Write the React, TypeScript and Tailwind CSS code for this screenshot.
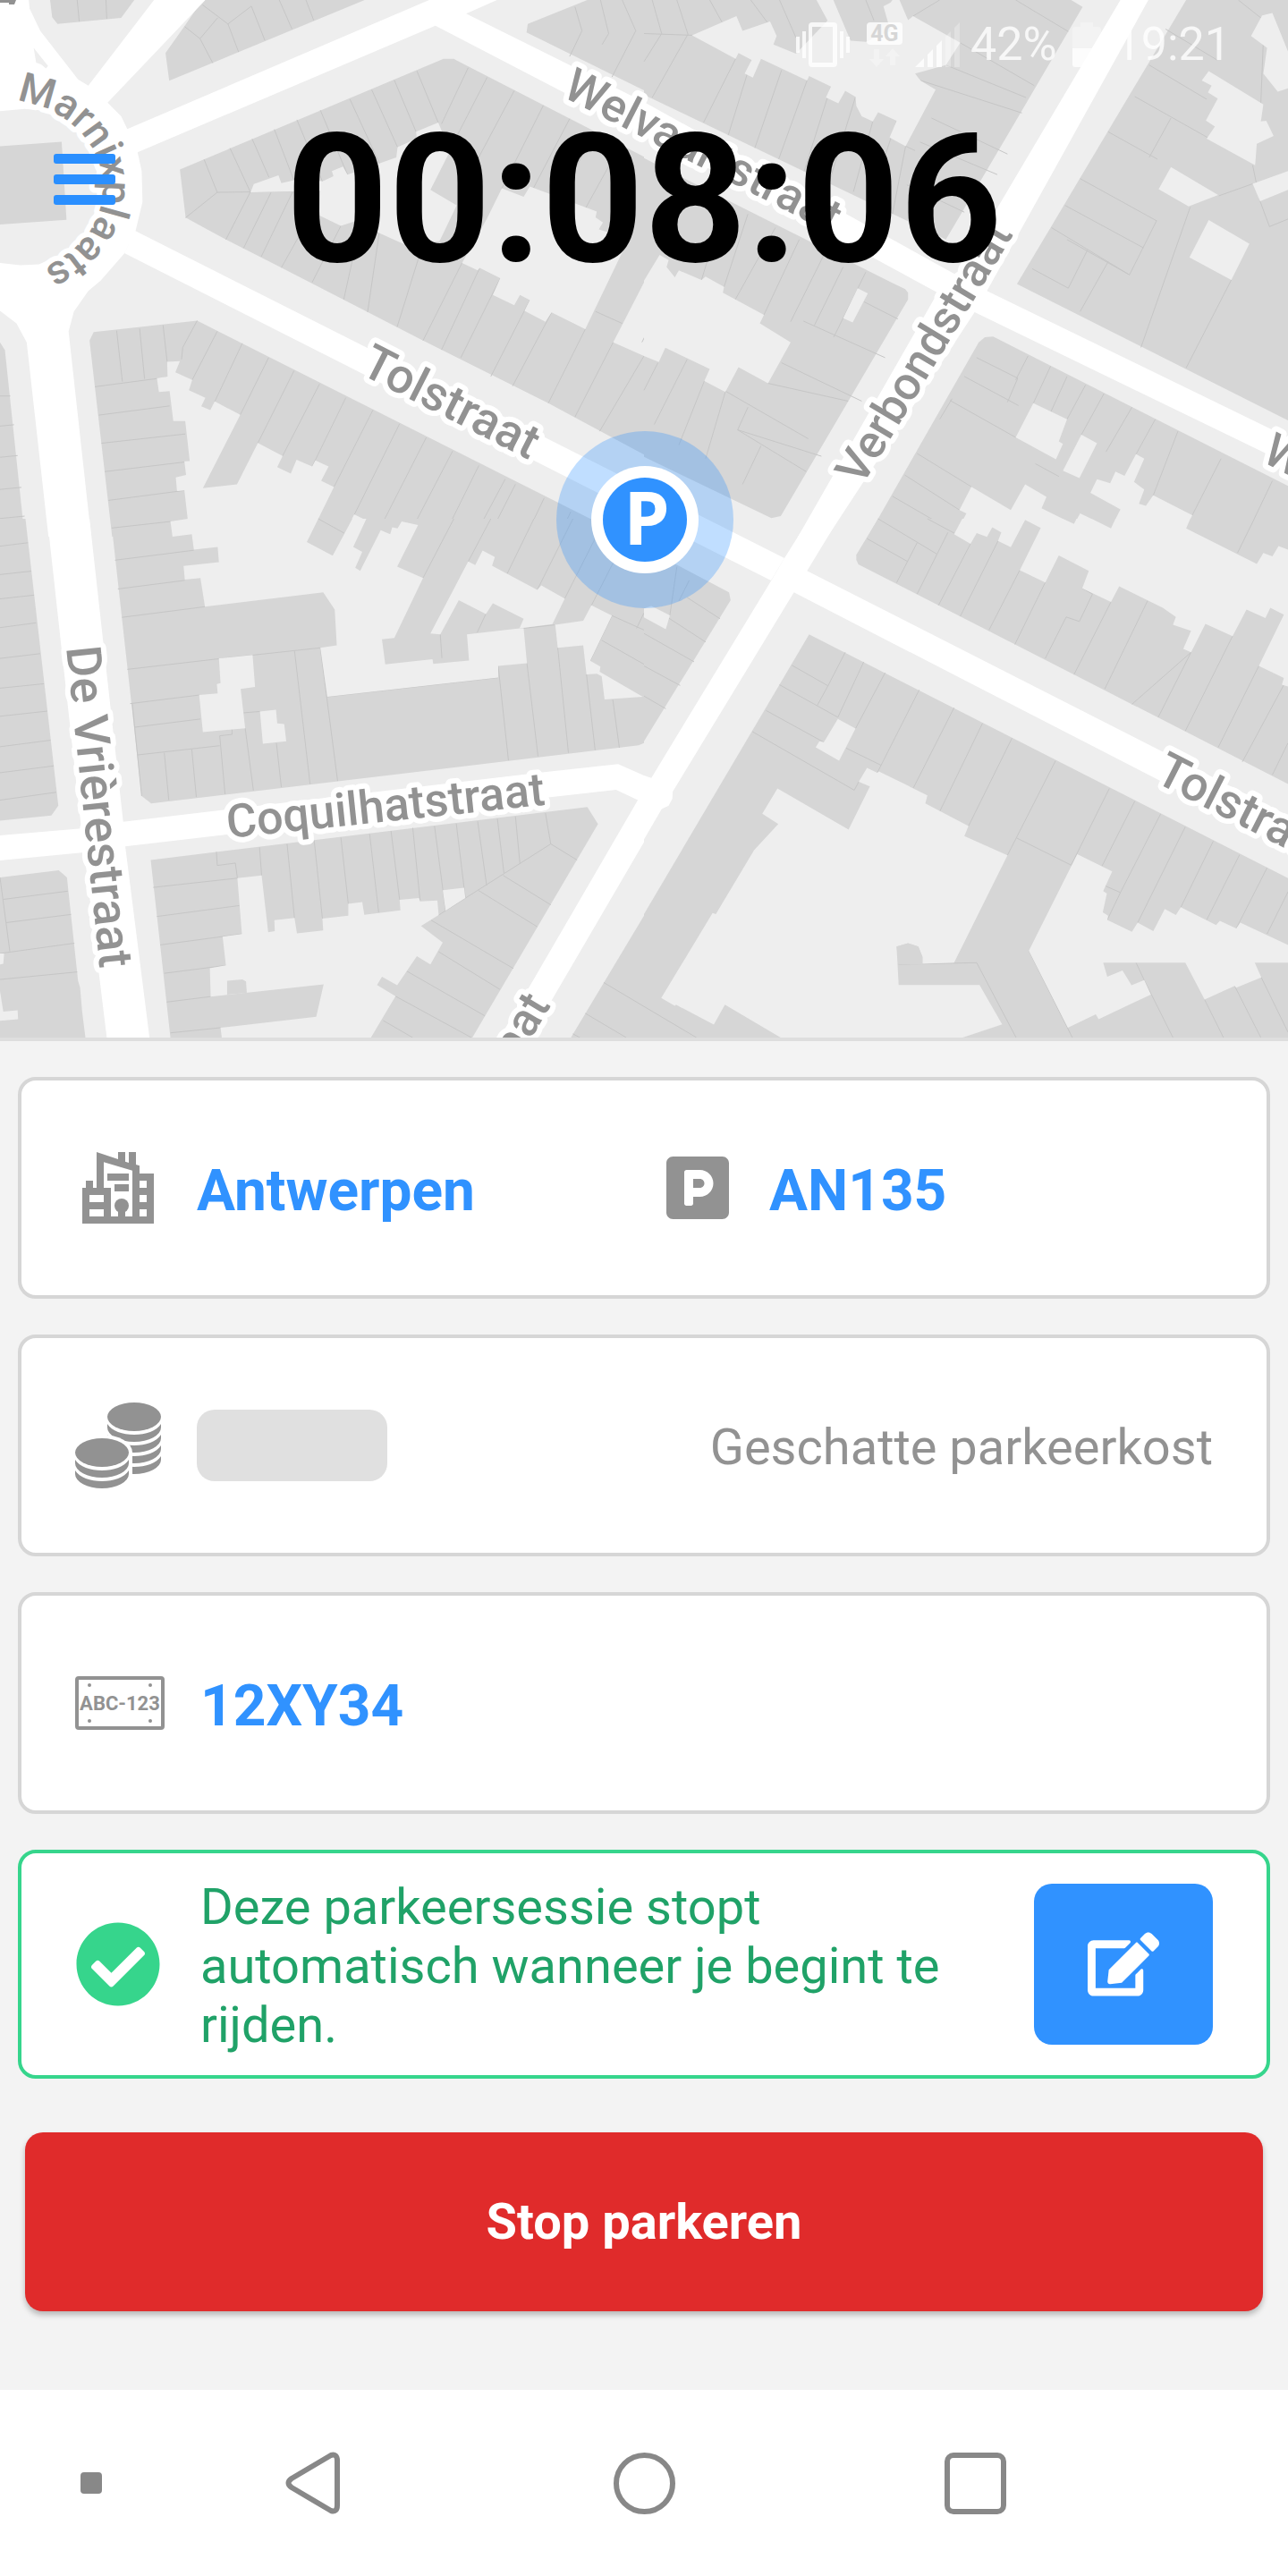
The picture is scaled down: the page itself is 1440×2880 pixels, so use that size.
import type { ReactNode } from "react";
import { FaCheckCircle, FaEdit, FaParking } from "react-icons/fa";

const GROUND = "#eeeeee";

type TileData = {
  transform: string;
  blocks: string[];
  yards: string[];
  lots?: string[];
  parcels: string;
};

/* The city map is stored as four tiles; each tile has its own 1568-unit grid. */
const tiles: TileData[] = [
  {
    transform: "scale(0.45918 0.38265)",
    blocks: [
      "122,0 127,50 140,70 295,52 327,0",
      "493,0 450,75 403,155 412,236 888,0",
      "1430,0 1285,70 1282,95 1568,264 1568,0",
      "438,495 1080,172 1105,172 1568,458 1568,1328 1335,1178 1030,995 685,782 550,700 452,636",
      "218,995 228,970 480,937 1568,1595 273,1568",
      "0,1000 12,1023 60,1568 0,1568",
      "0,427 150,414 162,642 0,656",
    ],
    yards: [
      "610,562 618,538 678,512 685,535 740,520 785,530 812,515 808,500 835,487 846,510 965,460 968,430 1015,405 1013,385 1067,358 1085,410 1092,450 1048,555 1112,600 1070,705 985,714 922,680 880,640 830,660 778,630 780,558",
      "1222,550 1275,575 1290,545 1453,618 1450,635 1468,650 1458,670 1485,680 1530,700 1425,962 1343,913 1328,940 1277,908 1290,877 1266,862 1252,892 1200,862 1218,813 1168,783 1163,790 1125,768 1185,640",
      "1568,825 1493,1000 1568,1040",
      "407,1057 438,1055 427,1088 468,1110 460,1140 500,1162 490,1187 512,1198 523,1173 585,1212 494,1426 577,1415 628,1294 688,1332 675,1365 708,1384 722,1343 760,1363 768,1345 800,1363 782,1405 813,1423 775,1516 775,1568 418,1568 415,1525 457,1517 449,1433 431,1435 428,1395 453,1388 449,1348 462,1347 451,1230 422,1230 413,1143 387,1145 382,1105 408,1100",
      "862,1503 892,1520 875,1568 837,1568",
    ],
    parcels:
      "M188 0L193 63M258 0L260 55M493 14L555 70L612 18M555 70L581 152M612 18L645 118M680 0L711 85M530 52L487 113L450 78M487 113L518 184M745 0L764 60" +
      "M497 466L529 562L452 636M529 562L780 558M560 433L610 562M614 406L655 518M668 378L715 525M723 350L785 530M780 322L846 510M852 290L925 480M905 262L968 430M960 234L1013 385M1015 207L1067 358" +
      "M1140 198L1075 362M1186 226L1090 450M1252 265L1130 540M1323 308L1222 550M1387 347L1290 570M1450 385L1360 580M1510 425L1425 610" +
      "M609 562L550 700M660 562L593 725M712 562L636 750M770 600L685 782M830 660L760 825M880 640L837 875M925 668L895 912M1030 712L967 955M1125 768L1030 995M1168 783L1075 1022M1218 813L1122 1045M1290 877L1195 1100M1343 913L1248 1128M1425 962L1335 1178M1493 1000L1400 1218M1568 1040L1460 1260M1450 910L1515 945" +
      "M284 966L298 1115M340 960L352 1107M397 950L407 1057M231 1130L408 1102M480 937L445 1015L442 1050M529 968L468 1110M590 1003L523 1173M654 1045L585 1212M716 1083L628 1294M778 1122L688 1332M842 1162L760 1363M908 1198L813 1423M973 1238L860 1510M1038 1278L935 1520M1102 1318L1010 1530M1166 1360L1080 1568M1230 1400L1155 1568M1255 1415L1190 1568M1325 1455L1280 1568M1390 1495L1360 1568" +
      "M240 1213L413 1186M247 1295L451 1268M255 1378L449 1350M264 1462L449 1433M273 1543L415 1525M0 1157L25 1157M0 1245L34 1241M0 1336L43 1331M0 1430L52 1424M0 1515L60 1508" +
      "M1400 20L1417 90L1387 165M1462 0L1482 98L1466 130M1515 0L1548 90L1490 225",
  },
  {
    transform: "translate(720 0) scale(0.45918 0.38265)",
    blocks: [
      "0,0 1040,0 1068,20 890,385 735,700 640,645 0,277",
      "0,462 600,824 636,845 643,855 643,875 333,1508 310,1514 0,1335",
      "1320,0 908,830 1568,1228 1568,0",
      "830,985 850,983 1568,1420 1568,1568 545,1568 815,1000",
    ],
    yards: [
      "117,103 225,47 240,90 307,63 323,105 315,130 370,157 447,60 420,0 461,0 503,119 540,122 600,90 583,18 600,8 605,0 622,0 643,59 655,47 770,125 735,190 660,215 673,235 710,262 637,427 598,402 615,353 570,328 557,355 530,340 517,310 515,283 490,265 473,302 443,285 455,253 402,222 397,235 285,172 265,227 245,215 262,175 230,155 223,172",
      "0,820 38,745 60,760 55,780 75,810 85,790 140,818 150,808 195,838 192,855 292,920 282,945 357,1000 302,1120 230,1073 198,1145 147,1113 160,1078 52,1016 36,1058 0,1040",
      "520,842 545,857 508,942 485,930",
      "1375,208 1508,305 1502,355 1515,353 1533,397 1492,420 1488,483 1370,405 1390,370 1368,352 1397,288 1373,270 1382,250 1358,235",
      "1530,38 1568,150 1568,258 1543,268 1508,215 1517,140 1478,105 1505,45",
      "1283,488 1398,570 1326,603 1253,553",
      "1482,537 1568,500 1568,555 1500,588",
      "1375,643 1474,712 1430,818 1328,752",
      "948,1178 1030,1225 1010,1290 1020,1297 1003,1342 905,1278",
      "1065,1270 1103,1295 1060,1397 1020,1375",
      "797,1422 893,1490 928,1415 980,1452 968,1485 1047,1532 1062,1500 1137,1543 1160,1488 1087,1440 1103,1400 1135,1412 1148,1378 1170,1390 1198,1327 1218,1340 1193,1408 1218,1430 1205,1472 1222,1478 1240,1447 1335,1505 1320,1540 1320,1568 755,1568 785,1500 768,1490",
    ],
    parcels:
      "M20 0L43 98L0 180M80 0L107 100L20 285M0 98L117 103M160 0L190 65M260 0L300 65M330 0L370 110M223 172L145 358M262 175L205 395M335 205L270 432M397 235L328 465M455 253L390 500M515 283L450 535M557 355L510 560M615 353L550 590" +
      "M540 0L560 60M720 0L655 47M770 125L950 250M673 235L920 330M637 427L605 625M672 415L860 510M637 427L660 440M640 540L780 620M700 345L885 450M905 0L1033 92M735 190L930 285" +
      "M1270 85L1395 175M1230 190L1370 290M1195 282L1488 480M1130 385L1250 465M1283 345L1230 460M1062 522L1248 645L1182 803L1030 700M1025 600L1216 724M992 665L1182 803M1080 730L1033 842L945 785M1130 765L1062 910M1330 605L1210 1015M1430 818L1320 1075M1400 572L1482 537M1482 483L1500 588L1523 662L1568 640M1447 0L1510 60L1500 355" +
      "M75 810L-5 1000M198 590L140 818M253 625L195 838M320 665L220 880M378 700L292 920M440 740L357 940M485 780L415 950M540 795L462 985M536 882L618 932M388 938L587 1045M335 1060L530 1172M302 1120L497 1172M180 1130L400 1282M253 1190L228 1256L432 1333M285 1302L240 1415M228 1256L395 1378M105 1050L25 1240M147 1113L85 1300M198 1145L150 1340M34 1060L0 1140" +
      "M780 1100L912 1185M810 1045L910 1105L885 1175M935 1040L905 1110M990 1070L948 1178M1030 1100L990 1205M1075 1125L1030 1225M1120 1150L1065 1270M1188 1190L1125 1320M1245 1225L1198 1327M1300 1260L1240 1447M1405 1340L1335 1505M1530 1405L1465 1568M745 1170L905 1278M665 1325L797 1422M635 1388L768 1490M605 1450L720 1530M953 1355L1010 1392M750 1165L720 1225",
  },
  {
    transform: "translate(0 580) scale(0.45918 0.38265)",
    blocks: [
      "270,0 1568,0 1568,655 1555,662 368,832 345,810",
      "367,997 1430,842 1456,892 1150,1516 415,1516",
      "0,0 62,0 142,838 125,867 0,882",
      "0,1048 143,1027 163,1048 190,1350 195,1370 200,1440 208,1516 0,1516",
      "1568,1160 1390,1516 1568,1516",
    ],
    yards: [
      "457,0 415,8 420,52 467,45 472,90 530,82 533,127 447,138 450,178 488,173 499,257 787,215 815,265 820,370 780,377 797,520 1213,464 1213,430 1283,422 1275,320 1265,320 1137,338 1142,414 1055,424 1053,410 938,425 930,352 960,348 1030,173 967,140 1018,18 978,8 968,28 955,25 950,45 927,33 877,152 865,143 882,97 860,82 892,0 858,0 810,108 747,68 775,0",
      "1048,335 1140,125 1157,135 1175,93 1205,112 1198,137 1308,208 1318,195 1375,233 1345,308 1265,320 1275,292 1200,247 1183,278 1117,238 1072,338",
      "1352,310 1420,298 1440,253 1490,283 1437,415 1462,432 1460,447 1565,520 1472,528 1465,460 1453,453 1428,455 1420,370 1358,377",
      "533,408 615,398 621,491 586,497 597,612 494,623 485,515 530,510 528,483 537,480",
      "633,563 672,558 675,598 692,600 697,650 640,657",
      "578,1050 637,1042 653,1208 669,1205 668,1173 717,1166 723,1211 787,1203 785,1168 848,1160 848,1125 882,1120 887,1157 975,1144 973,1113 1020,1108 1023,1118 1065,1115 1068,1158 1025,1190 1078,1238 1048,1302 1015,1278 967,1363 930,1338 918,1362 963,1395 903,1516 540,1516 537,1487 770,1455 788,1360 513,1396 511,1313 550,1305 542,1221 589,1213",
      "1078,1085 1130,1078 1133,1108 1085,1145",
      "0,1270 10,1270 8,1300 0,1302",
      "0,1380 8,1440 43,1436 44,1462 0,1467",
    ],
    lots: ["553,1350 590,1346 599,1352 601,1385 553,1390"],
    parcels:
      "M272 27L415 8M280 121L472 92M287 205L450 180M297 288L499 257M310 440L533 409L780 377M317 540L485 515M328 609L488 585M335 690L535 663M322 540L345 810M400 684L411 822M467 674L478 813M565 615V630L535 634L548 805M597 612L617 794M593 567L633 563M673 655L685 784M717 385L755 775M780 377L822 766" +
      "M775 0L838 42M797 520L1213 464M1213 430L1238 706M1283 422L1310 694M1358 377L1384 684M1428 455L1449 676M1492 528L1508 669M1275 320L1350 310M1183 278L1162 332M1072 338L1076 407M1030 173L1105 0M1140 125L1195 0M1235 160L1300 0M1308 208L1395 0M1375 233L1465 20M1440 253L1535 30M1490 283L1568 325M1465 355L1568 425M1550 320L1568 275M1437 415L1490 283" +
      "M0 80L68 70M0 163L76 153M0 234L83 223M0 318L88 304M0 408L98 394M0 495L107 482M0 577L115 562M0 666L123 647M0 742L131 722M0 822L137 799" +
      "M8 1112L165 1088M15 1180L173 1156M0 1048L24 1264M0 1270L181 1240M0 1346L188 1324" +
      "M373 1077L578 1050M382 1162L583 1130M390 1245L589 1213M400 1328L550 1305M406 1412L513 1396M415 1502L537 1487M527 973L529 1013L573 1006L578 1050M632 960L637 1042M699 950L717 1166M765 940L785 1168M830 931L848 1125M900 921L922 1150M952 912L973 1113M1005 903L1023 1118M1058 898L1085 1145M1111 891L1133 1108M1163 884L1185 1072M1211 876L1227 1035M1255 870L1266 1008M1328 860L1341 950" +
      "M1068 1158L1341 950L1405 997M1225 1042L1341 1128M1165 1086L1308 1192M1050 1173L1250 1314M1068 1265L1217 1375M988 1320L1180 1452M963 1395L1148 1516M933 1466L1005 1516M1470 1355L1568 1425M1425 1445L1525 1516M1395 1505L1412 1516",
  },
  {
    transform: "translate(720 580) scale(0.45918 0.38265)",
    blocks: [
      "0,84 207,215 211,238 0,650",
      "570,0 517,105 517,120 522,133 1568,775 1568,0",
      "402,338 1568,1050 1568,1516 0,1516 0,1155",
    ],
    yards: [
      "775,0 755,45 795,73 810,42 835,53 848,25 870,40 862,65 893,83 928,3 966,27 915,150 977,186 1010,107 1083,152 1067,203 1137,243 1157,197 1263,260 1295,287 1288,310 1332,327 1313,380 1332,390 1367,307 1433,343 1467,265 1513,290 1525,260 1558,280 1497,430 1558,465 1553,485 1568,490 1568,90 1545,80 1530,110 1508,100 1492,132 1320,28 1330,0",
      "0,262 18,255 63,282 53,323 0,288",
      "325,788 498,908 550,782 523,768 543,728 568,742 572,738 690,808 685,832 790,898 780,927 885,983 755,1297 678,1300 678,1280 668,1250 643,1240 615,1250 620,1362 817,1362 872,1477 775,1516 333,1516 197,1420 170,1478 78,1420 75,1423 42,1400 167,1152 175,1155 268,968 327,892 288,862",
      "472,585 515,613 475,707 418,668 427,650 438,653",
      "1055,980 1140,1030 1118,1088 1127,1095 1117,1150 1130,1160 1128,1172 1188,1207 1202,1180 1240,1205 1268,1140 1295,1158 1307,1135 1393,1187 1402,1175 1442,1197 1452,1180 1568,1245 1568,1297 1487,1297 1503,1340 1442,1370 1438,1365 1365,1405 1318,1297 1118,1297 1128,1338 1165,1320 1187,1363 1218,1348 1234,1390 1107,1462 1100,1448 1032,1487 937,1262",
    ],
    lots: ["1020,0 1047,15 1053,0", "1090,0 1137,28 1148,0", "615,1250 643,1240 668,1250 678,1280 678,1302 620,1302"],
    parcels:
      "M0 335L122 418M0 430L88 487M0 518L53 555M60 290L150 360M105 230L185 292M80 140L63 282M110 180L85 240" +
      "M570 0L713 103M543 58L642 125M665 70L615 187M740 40L665 220M795 73L717 253M862 65L770 285M915 150L840 325M977 186L903 367M1067 203L1092 220L1060 300L1028 287L977 408M1137 243L1047 455M1226 240L1122 497M1332 390L1188 542M1332 390L1252 580M1433 343L1318 620M1497 430L1398 668M1558 485L1457 710M1568 655L1530 748M1486 0L1445 100M690 0L760 45" +
      "M360 428L448 488L490 390M330 485L472 580L535 418M422 545L448 488M297 560L438 653M264 622L512 793L523 768M515 613L587 450M492 670L577 720M568 742L670 500M656 786L755 552M720 855L824 598M790 898L896 641M885 983L1002 707M908 933L1040 1012L1133 788M1115 1015L1195 825M1118 1070L1160 1092L1258 862M1202 1180L1318 900M1160 1092L1128 1172M1307 1135L1386 942M1370 1172L1450 982M1442 1197L1517 1020M1517 1213L1568 1090" +
      "M620 1302L810 1297L906 1516M937 1262L1043 1516M1198 1297L1218 1348L1288 1516M1365 1405L1411 1516M1438 1365L1502 1516M1503 1340L1568 1500M0 1425L128 1516",
  },
];

const labels = [
  { text: "Welvaartstraat", x: 627, y: 107, angle: 27, size: 52 },
  { text: "Tolstraat", x: 401, y: 417, angle: 27, size: 54 },
  { text: "Verbondstraat", x: 963, y: 545, angle: -59, size: 52 },
  { text: "De Vrièrestraat", x: 74, y: 724, angle: 84, size: 54 },
  { text: "Coquilhatstraat", x: 255, y: 937, angle: -6, size: 52 },
  { text: "Tolstraat", x: 1289, y: 873, angle: 27, size: 54 },
  { text: "Welvaartstraat", x: 1409, y: 515, angle: 27, size: 52 },
  { text: "Verbondstraat", x: 446, y: 1407, angle: -59, size: 52 },
];

function MapTile({ tile }: { tile: TileData }) {
  return (
    <g transform={tile.transform}>
      <g fill="#d6d6d6">
        {tile.blocks.map((p) => (
          <polygon key={p} points={p} />
        ))}
      </g>
      <path d={tile.parcels} fill="none" stroke="#c6c6c6" strokeWidth="1" vectorEffect="non-scaling-stroke" />
      <g fill={GROUND}>
        {tile.yards.map((p) => (
          <polygon key={p} points={p} />
        ))}
      </g>
      <g fill="#d6d6d6">
        {tile.lots?.map((p) => (
          <polygon key={p} points={p} />
        ))}
      </g>
    </g>
  );
}

function CityMap() {
  return (
    <svg viewBox="0 0 1440 1160" className="block h-auto w-full" role="img" aria-label="Kaart">
      <defs>
        <path id="plaats" d="M18 113C66 117 115 156 115 210C115 250 90 282 36 306" />
      </defs>
      <rect width="1440" height="1160" fill={GROUND} />
      {tiles.map((t) => (
        <MapTile key={t.transform} tile={t} />
      ))}
      <g fill="#ffffff">
        <g transform="scale(0.45918 0.38265)">
          <path
            fillRule="evenodd"
            d="M0 0H70L72 25L98 90L190 232L215 250L375 0H500L262 300L295 340L310 377L1045 0H1210L1135 40L1568 298V390L1365 265L1060 75L335 445L345 500L347 590L330 675L303 740L245 820L215 850L180 910L167 968L222 1568H118L65 1000L40 945L0 908V768L50 775L95 772L150 742L200 690L240 600L235 500L205 410L155 350L95 322L60 318L0 325ZM82 140L88 183L100 188L112 200L117 193Z"
          />
        </g>
        <path d="M151 258L877 624L862 649L139 283Z" />
        <g transform="translate(720 0) scale(0.45918 0.38265)">
          <path d="M0 298L763 805L1160 0H1228L835 850L1568 1278V1356L805 912L447 1568H375L715 855L0 390Z" />
        </g>
        <g transform="translate(0 580) scale(0.45918 0.38265)">
          <path d="M115 0H218L300 885L1320 741L1505 717L1568 750V945L1290 1516H1217L1553 822L1500 792L1330 815L305 957L364 1516H260L205 975L0 998V925L198 905Z" />
        </g>
        <g transform="translate(720 580) scale(0.45918 0.38265)">
          <path d="M402 0H474L397 152L1568 867V958L365 215L70 797L69 818L60 838L43 848L0 937V750L18 757L310 180L342 115Z" />
        </g>
      </g>
      <path d="M0 0H18L16 5H10V3H0Z" fill="#929292" />
      <g
        className="font-[Roboto,sans-serif] font-medium"
        fill="#929292"
        stroke="#ffffff"
        strokeWidth="12"
        strokeLinejoin="round"
        paintOrder="stroke"
      >
        {labels.map((l) => (
          <text key={`${l.text}${l.x}`} fontSize={l.size} transform={`translate(${l.x} ${l.y}) rotate(${l.angle})`}>
            {l.text}
          </text>
        ))}
        <text fontSize="46">
          <textPath href="#plaats">Marnixplaats</textPath>
        </text>
      </g>
      <circle cx="721" cy="581" r="99" fill="#3092ff" fillOpacity="0.3" />
      <circle cx="721" cy="581" r="60" fill="#ffffff" />
      <circle cx="721" cy="581" r="47" fill="#3092ff" />
      <text x="723" y="609" textAnchor="middle" className="font-['Open_Sans',sans-serif] text-[82px] font-bold" fill="#ffffff">
        P
      </text>
    </svg>
  );
}

function StatusBar() {
  return (
    <div className="absolute inset-x-0 top-0 flex items-center justify-end pt-[22px] pr-16 text-[52px] leading-[56px] text-white/80">
      <svg width="60" height="50" viewBox="0 0 60 50" fill="currentColor" className="mr-[19px]" aria-label="Trillen">
        <path fillRule="evenodd" d="M18 0H42Q46 0 46 4V46Q46 50 42 50H18Q14 50 14 46V4Q14 0 18 0ZM18 5V45H41V5Z" />
        <path d="M0 16H4V34H0ZM7 10H11V40H7ZM49 10H53V40H49ZM56 16H60V34H56Z" />
      </svg>
      <span className="mr-[14px] flex flex-col items-center gap-1">
        <span className="flex h-[25px] w-10 items-center justify-center rounded-[4px] bg-white/80 text-[25px] font-bold leading-none text-[#d6d6d6]">
          4G
        </span>
        <svg width="34" height="21" viewBox="0 0 34 21" fill="currentColor" opacity="0.4" aria-hidden="true">
          <path d="M5 1H11V12H16L8 21L0 12H5ZM23 19H29V9H34L26 0L18 9H23Z" />
        </svg>
      </span>
      <svg width="50" height="50" viewBox="0 0 50 50" fill="currentColor" className="mr-[12px]" aria-label="Signaal">
        <path d="M0 50L10 40V50ZM14 36L20 30V50H14ZM24 26L30 20V50H24Z" />
        <path opacity="0.35" d="M34 16L40 10V50H34ZM44 6L50 0V50H44Z" />
      </svg>
      <span className="mr-[17px]">42%</span>
      <svg width="32" height="50" viewBox="0 0 32 50" fill="currentColor" className="mr-4" aria-label="Batterij">
        <path opacity="0.35" d="M9 0H23V5H29Q32 5 32 8V29H0V8Q0 5 3 5H9Z" />
        <path d="M0 29H32V47Q32 50 29 50H3Q0 50 0 47Z" />
      </svg>
      <span>19:21</span>
    </div>
  );
}

function CityIcon() {
  return (
    <svg width="80" height="80" viewBox="0 0 20 20" fill="#929292" aria-hidden="true">
      <path
        fillRule="evenodd"
        d="M0 20V10H1V8H3V10H4V0L10 2V0H12V2.7L13 3V0H15V3.5L16 3.8V6H20V20ZM6 2.8V10H8V18H14V5.2ZM2 12V14H6V12ZM2 16V18H6V16ZM16 8V10H18V8ZM16 12V14H18V12ZM16 16V18H18V16Z"
      />
      <path d="M7 6H13V8H7ZM9 9H13V11H9ZM10 16H12V18H10Z" />
      <circle cx="11" cy="15" r="2" />
    </svg>
  );
}

const COIN_EDGE = "M0 0C5 8 17 12 30 12S55 8 60 0V4A30 16 0 0 1 0 4Z";

function CoinsIcon() {
  return (
    <svg width="96" height="96" viewBox="0 0 96 96" fill="#929292" aria-hidden="true">
      <ellipse cx="66" cy="16" rx="30" ry="16" />
      {[24, 36, 48, 60].map((y) => (
        <path key={y} d={COIN_EDGE} transform={`translate(36 ${y})`} />
      ))}
      <path d="M-4 56A34 20 0 0 1 64 56V96H-4Z" fill="#ffffff" />
      <ellipse cx="30" cy="56" rx="30" ry="16" />
      {[64, 76].map((y) => (
        <path key={y} d={COIN_EDGE} transform={`translate(0 ${y})`} />
      ))}
    </svg>
  );
}

function PlateIcon() {
  return (
    <svg width="100" height="60" viewBox="0 0 100 60" fill="#929292" className="shrink-0" aria-hidden="true">
      <rect x="2" y="2" width="96" height="56" rx="2" fill="none" stroke="#929292" strokeWidth="4" />
      <circle cx="16" cy="10" r="2" />
      <circle cx="84" cy="10" r="2" />
      <circle cx="16" cy="50" r="2" />
      <circle cx="84" cy="50" r="2" />
      <text x="50" y="38" textAnchor="middle" className="font-[Roboto,sans-serif] text-[22px] font-bold">
        ABC-123
      </text>
    </svg>
  );
}

function Card({ children, highlighted = false }: { children: ReactNode; highlighted?: boolean }) {
  return (
    <section
      className={
        highlighted
          ? "flex min-h-64 items-center rounded-[20px] border-4 border-[#36d58c] bg-white px-[60px]"
          : "flex min-h-[248px] items-center rounded-[20px] border-4 border-[#d6d6d6] bg-white px-[60px]"
      }
    >
      {children}
    </section>
  );
}

function IconSlot({ children }: { children: ReactNode }) {
  return <span className="flex w-24 shrink-0 items-center justify-center">{children}</span>;
}

export default function App() {
  return (
    <div className="flex min-h-screen flex-col bg-[#f3f3f3] font-[Roboto,sans-serif]">
      <header className="relative overflow-hidden border-b-4 border-[#dedede]">
        <CityMap />
        <StatusBar />
        <button type="button" aria-label="Menu" className="absolute top-[172px] left-[60px] flex w-[69px] flex-col gap-3">
          <span className="h-[11px] rounded-[3px] bg-[#2a8fff]" />
          <span className="h-[11px] rounded-[3px] bg-[#2a8fff]" />
          <span className="h-[11px] rounded-[3px] bg-[#2a8fff]" />
        </button>
        <h1 className="absolute inset-x-0 top-[124px] text-center text-[200px] font-bold leading-none text-black">00:08:06</h1>
      </header>

      <main className="flex flex-1 flex-col gap-10 px-5 pt-10">
        <Card>
          <div className="grid flex-1 grid-cols-2 text-[64px] font-bold leading-none text-[#3092ff]">
            <div className="flex items-center gap-10">
              <IconSlot>
                <CityIcon />
              </IconSlot>
              <span className="pt-2">Antwerpen</span>
            </div>
            <div className="flex items-center gap-8 pl-3">
              <IconSlot>
                <FaParking size={80} color="#929292" />
              </IconSlot>
              <span className="pt-2">AN135</span>
            </div>
          </div>
        </Card>

        <Card>
          <IconSlot>
            <CoinsIcon />
          </IconSlot>
          <span className="ml-10 h-20 w-[213px] rounded-[20px] bg-[#e0e0e0]" />
          <span className="ml-auto pt-1 text-[56px] leading-[66px] text-[#929292]">Geschatte parkeerkost</span>
        </Card>

        <Card>
          <PlateIcon />
          <span className="ml-10 pt-2 text-[64px] font-bold leading-none text-[#3092ff]">12XY34</span>
        </Card>

        <Card highlighted>
          <IconSlot>
            <FaCheckCircle size={96} color="#36d58c" />
          </IconSlot>
          <p className="ml-11 max-w-[880px] pt-1 text-[56px] leading-[66px] text-[#20a268]">
            Deze parkeersessie stopt automatisch wanneer je begint te rijden.
          </p>
          <button
            type="button"
            aria-label="Bewerken"
            className="ml-auto flex h-[180px] w-[200px] shrink-0 items-center justify-center rounded-[20px] bg-[#3092ff] text-white"
          >
            <FaEdit size={80} />
          </button>
        </Card>

        <button
          type="button"
          className="mx-2 mt-5 mb-[88px] h-[200px] rounded-[20px] bg-[#e02b2b] text-[56px] font-bold leading-none text-white shadow-[0_4px_6px_rgba(0,0,0,0.25)]"
        >
          Stop parkeren
        </button>
      </main>

      <nav className="grid h-52 grid-cols-[165px_1fr_1fr_1fr_165px] items-center bg-white">
        <button type="button" aria-label="Verberg balk" className="ml-[90px] size-6 rounded-[4px] bg-[#888888]" />
        <button type="button" aria-label="Terug" className="flex justify-center">
          <svg width="62" height="70" viewBox="0 0 62 70" fill="none" stroke="#888888" strokeWidth="6" strokeLinejoin="round" aria-hidden="true">
            <path d="M51 4L7 30Q0 35 7 40L51 66Q58 68 58 60V10Q58 2 51 4Z" />
          </svg>
        </button>
        <button type="button" aria-label="Start" className="flex justify-center">
          <span className="size-[69px] rounded-full border-[6px] border-[#888888]" />
        </button>
        <button type="button" aria-label="Recente apps" className="flex justify-center">
          <span className="size-[69px] rounded-[10px] border-[6px] border-[#888888]" />
        </button>
      </nav>
    </div>
  );
}
